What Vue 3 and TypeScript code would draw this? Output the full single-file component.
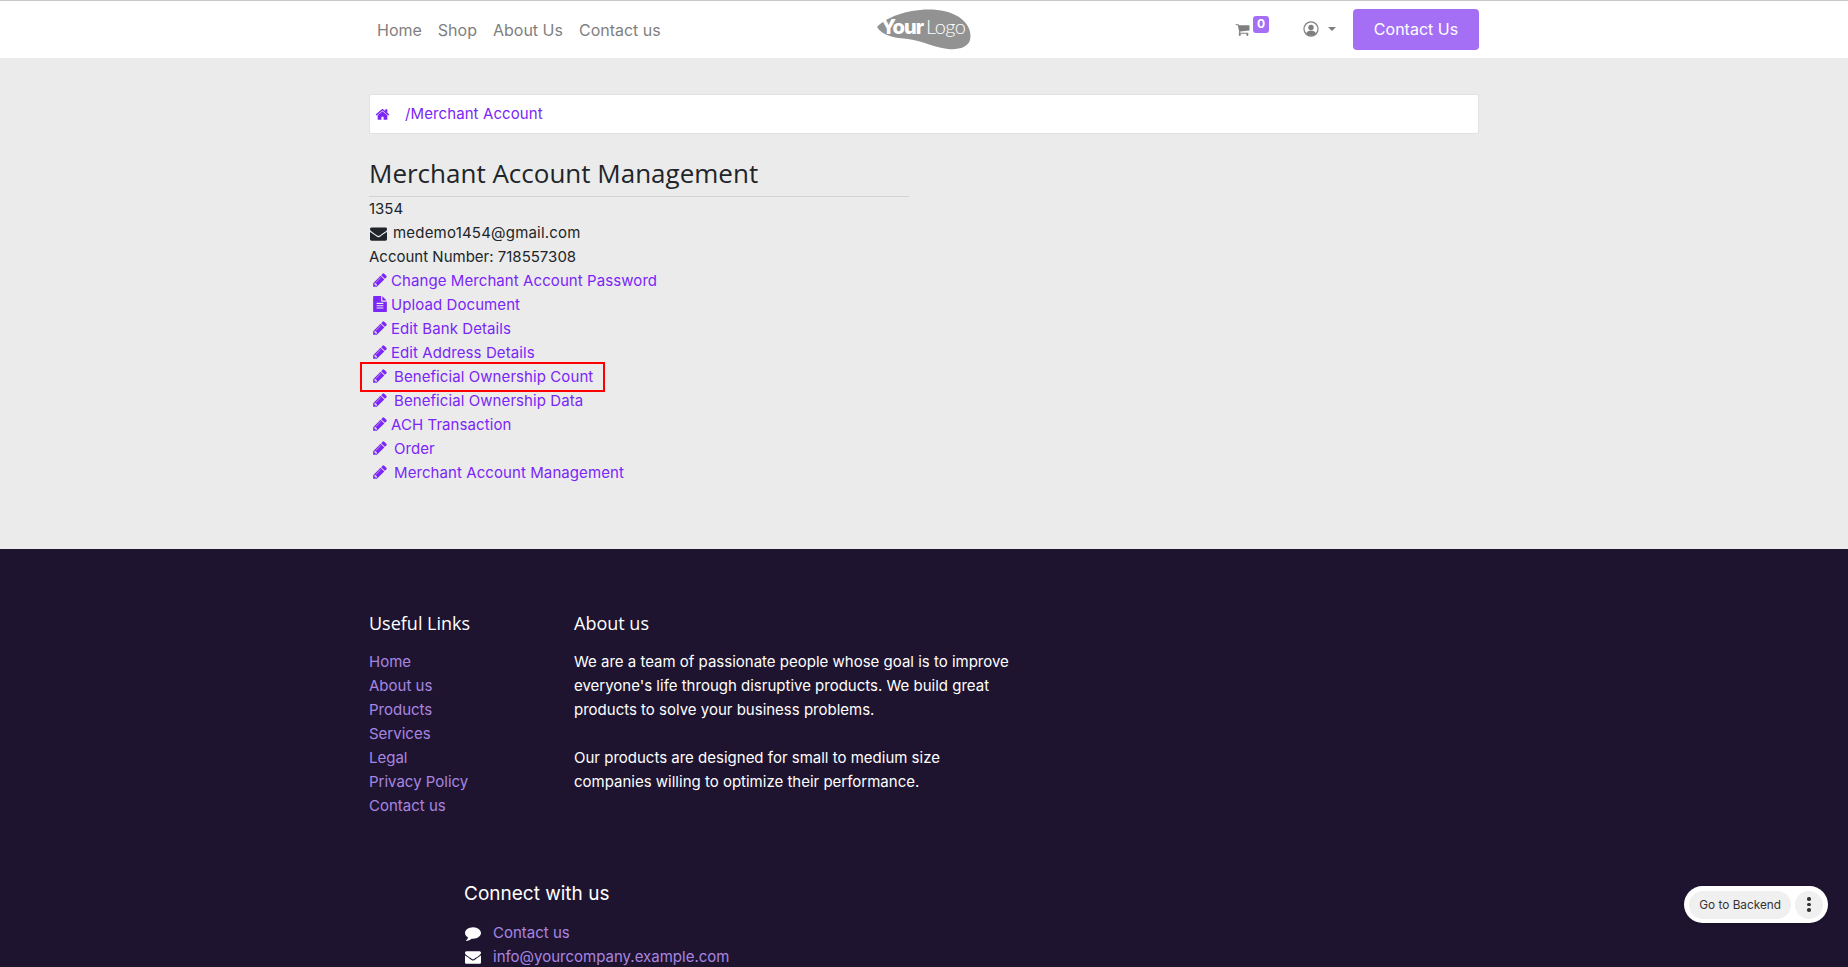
<template>
  <div class="page">
    <header class="topbar">
      <div class="container topbar-inner">
        <nav class="main-nav">
          <a v-for="item in navItems" :key="item" class="nav-link">{{ item }}</a>
        </nav>
        <svg class="logo" viewBox="0 0 96 42" aria-label="Your Logo">
          <path class="logo-blob" d="M1 18C6 12 19 5 36 2C52 -1 71 0 83 8C92 14 96 23 94 31C92 38 83 41 72 40C60 39 47 32 32 30C20 29 6 27 1 18Z" />
          <text class="logo-your" x="5" y="25">Your</text>
          <text class="logo-thin" x="50" y="25">Logo</text>
        </svg>
        <div class="nav-tools">
          <div class="cart">
            <svg class="cart-icon" viewBox="0 0 1792 1792"><path :d="icons.cart" /></svg>
            <span class="cart-badge">0</span>
          </div>
          <div class="user-menu">
            <svg class="user-icon" viewBox="0 0 20 20">
              <circle cx="10" cy="10" r="8.8" fill="none" stroke="currentColor" stroke-width="1.5" />
              <circle cx="10" cy="8" r="3.4" fill="currentColor" />
              <path d="M3.8 15.6C5 12.8 7.300 11.900 10 11.900S15 12.800 16.200 15.600C14.600 17.500 12.400 18.400 10 18.400S5.400 17.500 3.800 15.600Z" fill="currentColor" />
            </svg>
            <span class="caret"></span>
          </div>
          <a class="contact-btn">Contact Us</a>
        </div>
      </div>
    </header>

    <main class="main">
      <div class="container">
        <div class="breadcrumb">
          <svg class="crumb-home" viewBox="0 0 1792 1792"><path :d="icons.home" /></svg>
          <a class="crumb-link">/Merchant Account</a>
        </div>
        <section class="account">
          <h3 class="account-title">Merchant Account Management</h3>
          <div class="line">1354</div>
          <div class="line">
            <svg class="mail-icon" viewBox="0 0 1792 1792"><path :d="icons.envelope" /></svg>
            <span class="email">medemo1454@gmail.com</span>
          </div>
          <div class="line">Account Number: 718557308</div>
          <a
            v-for="link in accountLinks"
            :key="link.label"
            class="line action"
            :class="{ wide: link.wide }"
          >
            <svg class="action-icon" viewBox="0 0 1792 1792"><path :d="link.doc ? icons.file : icons.pencil" /></svg>
            <span>{{ link.label }}</span>
            <span v-if="link.marked" class="marker"></span>
          </a>
        </section>
      </div>
    </main>

    <footer class="footer">
      <div class="container">
        <div class="footer-cols">
          <div class="links-col">
            <h5 class="footer-title">Useful Links</h5>
            <a v-for="item in usefulLinks" :key="item" class="footer-link">{{ item }}</a>
          </div>
          <div class="about-col">
            <h5 class="footer-title">About us</h5>
            <p class="about-text">We are a team of passionate people whose goal is to improve everyone's life through disruptive products. We build great products to solve your business problems.</p>
            <p class="about-text">Our products are designed for small to medium size companies willing to optimize their performance.</p>
          </div>
        </div>
        <div class="connect">
          <h5 class="footer-title connect-title">Connect with us</h5>
          <a class="connect-row">
            <svg class="connect-icon" viewBox="0 0 1792 1792"><path :d="icons.comment" /></svg>
            <span>Contact us</span>
          </a>
          <a class="connect-row">
            <svg class="connect-icon" viewBox="0 0 1792 1792"><path :d="icons.envelope" /></svg>
            <span>info@yourcompany.example.com</span>
          </a>
        </div>
      </div>
    </footer>

    <div class="backend-pill">
      <span class="backend-link">Go to Backend</span>
      <span class="backend-more"><i></i><i></i><i></i></span>
    </div>
  </div>
</template>

<script setup lang="ts">
interface AccountLink {
  label: string
  wide?: boolean
  doc?: boolean
  marked?: boolean
}

const navItems: string[] = ['Home', 'Shop', 'About Us', 'Contact us']

const accountLinks: AccountLink[] = [
  { label: 'Change Merchant Account Password' },
  { label: 'Upload Document', doc: true },
  { label: 'Edit Bank Details' },
  { label: 'Edit Address Details' },
  { label: 'Beneficial Ownership Count', wide: true, marked: true },
  { label: 'Beneficial Ownership Data', wide: true },
  { label: 'ACH Transaction' },
  { label: 'Order', wide: true },
  { label: 'Merchant Account Management', wide: true }
]

const usefulLinks: string[] = ['Home', 'About us', 'Products', 'Services', 'Legal', 'Privacy Policy', 'Contact us']

const icons = {
  pencil: 'M491 1536l91-91-235-235-91 91v107h128v128h107zm523-928q0-22-22-22-10 0-17 7l-542 542q-7 7-7 17 0 22 22 22 10 0 17-7l542-542q7-7 7-17zm-54-192l416 416-832 832h-416v-416zm683 96q0 53-37 90l-166 166-416-416 166-165q36-38 90-38 53 0 91 38l235 234q37 39 37 91z',
  home: 'M1472 992v480q0 26-19 45t-45 19h-384v-384h-256v384h-384q-26 0-45-19t-19-45v-480q0-1 .5-3t.5-3l575-474 575 474q1 2 1 6zm223-69l-62 74q-8 9-21 11h-3q-13 0-21-7l-692-577-692 577q-12 8-24 7-13-2-21-11l-62-74q-8-10-7-23.500t11-21.500l719-599q32-26 76-26t76 26l244 204v-195q0-14 9-23t23-9h192q14 0 23 9t9 23v408l219 182q10 8 11 21.500t-7 23.500z',
  envelope: 'M1792 710v794q0 66-47 113t-113 47h-1472q-66 0-113-47t-47-113v-794q44 49 101 87 362 246 497 345 57 42 92.500 65.500t94.500 48 110 24.500h2q51 0 110-24.500t94.500-48 92.500-65.500q170-123 498-345 57-39 100-87zm0-294q0 79-49 151t-122 123q-376 261-468 325-10 7-42.500 30.500t-54 38-52 32.500-57.500 27-50 9h-2q-23 0-50-9t-57.500-27-52-32.500-54-38-42.500-30.500q-91-64-262-182.500t-205-142.500q-62-42-117-115.500t-55-136.500q0-78 41.500-130t118.500-52h1472q65 0 112.500 47t47.500 113z',
  file: 'M1596 476q14 14 28 36h-472v-472q22 14 36 28zm-476 164h544v1056q0 40-28 68t-68 28h-1344q-40 0-68-28t-28-68v-1600q0-40 28-68t68-28h800v544q0 40 28 68t68 28zm160 736v-64q0-14-9-23t-23-9h-704q-14 0-23 9t-9 23v64q0 14 9 23t23 9h704q14 0 23-9t9-23zm0-256v-64q0-14-9-23t-23-9h-704q-14 0-23 9t-9 23v64q0 14 9 23t23 9h704q14 0 23-9t9-23zm0-256v-64q0-14-9-23t-23-9h-704q-14 0-23 9t-9 23v64q0 14 9 23t23 9h704q14 0 23-9t9-23z',
  cart: 'M704 1536q0 52-38 90t-90 38-90-38-38-90 38-90 90-38 90 38 38 90zm896 0q0 52-38 90t-90 38-90-38-38-90 38-90 90-38 90 38 38 90zm128-1088v512q0 24-16.500 42.500t-40.500 21.500l-1044 122q13 60 13 70 0 16-24 64h920q26 0 45 19t19 45-19 45-45 19h-1024q-26 0-45-19t-19-45q0-11 8-31.500t16-36 21.500-40 15.500-29.500l-177-823h-204q-26 0-45-19t-19-45 19-45 45-19h256q16 0 28.500 6.500t19.500 15.500 13 24.500 8 26 5.500 29.500 4.500 26h1201q26 0 45 19t19 45z',
  comment: 'M1792 896q0 174-120 321.500t-326 233-450 85.500q-70 0-145-8-198 175-460 242-49 14-114 22-17 2-30.500-9t-17.500-29v-1q-3-4-.5-12t2-10 4.500-9.500l6-9 7-8.500 8-9q7-8 31-34.500t34.500-38 31-39.500 32.500-51 27-59 26-76q-157-89-247.500-220t-90.500-281q0-130 71-248.500t191-204.500 286-136.500 348-50.500q244 0 450 85.500t326 233 120 321.500z'
}
</script>

<style>
html,
body {
  margin: 0;
  overflow: hidden;
}
</style>

<style scoped>
.page {
  font-family: "Inter", "Liberation Sans", sans-serif;
  font-size: 15px;
  line-height: 24px;
  color: #212529;
  background: #ebebeb;
}

.container {
  width: 1110px;
  margin: 0 auto;
}

.topbar {
  height: 57px;
  background: #fff;
  border-top: 1px solid #c8c8c8;
}

.topbar-inner {
  height: 100%;
  display: grid;
  grid-template-columns: 1fr auto 1fr;
  align-items: center;
}

.main-nav {
  display: flex;
  gap: 16px;
  padding-left: 8px;
}

.nav-link {
  font-size: 16px;
  color: #7f7f7f;
}

.logo {
  width: 96px;
  height: 42px;
  display: block;
  overflow: visible;
}

.logo-blob {
  fill: #929292;
}

.logo-your {
  font-family: "Inter", sans-serif;
  font-size: 20px;
  font-weight: 800;
  letter-spacing: -1px;
  fill: #fff;
}

.logo-thin {
  font-family: "Lato", sans-serif;
  font-size: 20px;
  font-weight: 300;
  letter-spacing: -0.5px;
  fill: #fff;
}

.nav-tools {
  display: flex;
  align-items: center;
  justify-content: flex-end;
}

.cart {
  display: flex;
  align-items: flex-start;
  margin: 0 34px 6px 0;
  color: #7f7f7f;
}

.cart-icon {
  width: 15px;
  height: 15px;
  fill: #7f7f7f;
  margin-top: 6px;
}

.cart-badge {
  width: 16px;
  height: 17px;
  margin-left: 3px;
  border-radius: 3px;
  background: #a56ff5;
  color: #fff;
  font-size: 12px;
  font-weight: 700;
  line-height: 16px;
  text-align: center;
}

.user-menu {
  display: flex;
  align-items: center;
  gap: 9px;
  margin: 0 17px 2px 0;
  color: #7f7f7f;
}

.user-icon {
  width: 16px;
  height: 16px;
}

.caret {
  width: 0;
  height: 0;
  border-top: 4px solid #7f7f7f;
  border-left: 4px solid transparent;
  border-right: 4px solid transparent;
}

.contact-btn {
  width: 126px;
  height: 41px;
  border-radius: 4px;
  background: #a56ff5;
  color: #fff;
  font-size: 16px;
  line-height: 41px;
  text-align: center;
}

.main {
  padding: 36px 0 64px;
}

.breadcrumb {
  display: flex;
  align-items: center;
  height: 38px;
  padding-left: 5px;
  background: #fff;
  border: 1px solid #e2e2e2;
  border-radius: 2px;
  color: #7a26f6;
}

.crumb-home {
  width: 15px;
  height: 15px;
  fill: #7a26f6;
  margin-right: 15px;
}

.crumb-link {
  color: #7a26f6;
  letter-spacing: 0.1px;
}

.account {
  width: 540px;
  padding-top: 24px;
}

.account-title {
  margin: 0;
  padding-bottom: 7px;
  border-bottom: 1px solid #d2d2d2;
  font-family: "Open Sans", sans-serif;
  font-size: 26px;
  font-weight: 400;
  line-height: 31px;
  color: #212529;
}

.line {
  display: flex;
  align-items: center;
  height: 24px;
}

.mail-icon {
  width: 17px;
  height: 17px;
  margin: 0 6px 0 1px;
  fill: #212529;
}

.email {
  letter-spacing: 0.2px;
}

.action {
  position: relative;
  color: #7a26f6;
  letter-spacing: 0.08px;
}

.action-icon {
  width: 16px;
  height: 16px;
  flex: none;
  margin: 0 3.500px 2px 2.500px;
  fill: #7a26f6;
}

.wide .action-icon {
  margin-right: 6.500px;
}

.marker {
  position: absolute;
  left: -9px;
  top: -3px;
  width: 241px;
  height: 26px;
  border: 2px solid #f00;
  pointer-events: none;
}

.footer {
  height: 440px;
  padding-top: 62px;
  box-sizing: border-box;
  background: #1e1430;
  color: #fff;
}

.footer-cols {
  display: flex;
}

.links-col {
  display: flex;
  flex-direction: column;
  width: 205px;
}

.about-col {
  width: 440px;
}

.footer-title {
  margin: 0 0 15px;
  font-family: "Open Sans", sans-serif;
  font-size: 18px;
  font-weight: 400;
  line-height: 24px;
  color: #fff;
}

.connect-title {
  font-family: "Inter", sans-serif;
  font-size: 19px;
}

.footer-link {
  color: #a886e0;
}

.about-text {
  margin: 0 0 24px;
}

.connect {
  padding: 64px 0 0 95px;
}

.connect-row {
  display: flex;
  align-items: center;
  height: 24px;
  color: #a886e0;
}

.connect-icon {
  width: 16px;
  height: 16px;
  margin: 0 12px 0 1px;
  fill: #fff;
}

.backend-pill {
  position: fixed;
  right: 20px;
  bottom: 44px;
  display: flex;
  align-items: center;
  gap: 4px;
  height: 37px;
  padding: 0 5px;
  border-radius: 19px;
  background: #fff;
  box-shadow: 0 1px 3px rgba(0, 0, 0, 0.2);
  font-size: 11.800px;
  color: #333;
}

.backend-link {
  height: 28px;
  padding: 0 10px;
  border-radius: 14px;
  background: #f0f0f0;
  line-height: 28px;
}

.backend-more {
  display: flex;
  flex-direction: column;
  align-items: center;
  justify-content: center;
  gap: 2px;
  width: 28px;
  height: 28px;
  border-radius: 50%;
  background: #f0f0f0;
}

.backend-more i {
  width: 3.500px;
  height: 3.500px;
  border-radius: 50%;
  background: #333;
}
</style>
